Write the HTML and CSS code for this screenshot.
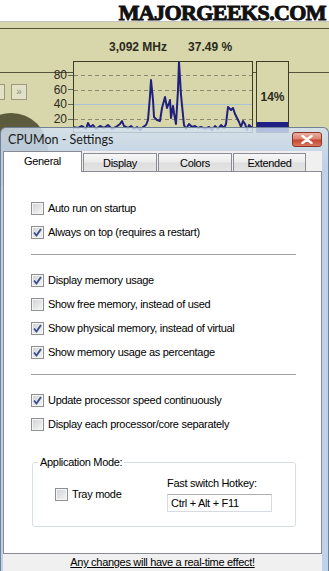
FILE: index.html
```html
<!DOCTYPE html>
<html lang="en">
<head>
    <meta charset="UTF-8">
    <title>CPUMon - Settings</title>
    <link rel="stylesheet" href="styles.css">
</head>
<body>
    <div class="brand"><span class="logo">MAJORGEEKS.COM</span></div>

    <div class="monitor">
        <div class="readout"><span>3,092 MHz</span><span>37.49 %</span></div>
        <div class="chart">
            <div class="side">
                <div class="nav"><span class="navbtn"></span><span class="navbtn">&raquo;</span></div>
                <div class="axis"><span>80</span><span>60</span><span>40</span><span>20</span></div>
            </div>
            <div class="graph">
                <svg width="178" height="70" viewBox="74 62 178 70">
                    <g stroke="#8a8970" stroke-width="1" stroke-dasharray="4 3">
                        <line x1="74" y1="75.5" x2="252" y2="75.5"/>
                        <line x1="74" y1="90.5" x2="252" y2="90.5"/>
                        <line x1="74" y1="119.5" x2="252" y2="119.5"/>
                    </g>
                    <line x1="74" y1="104.5" x2="252" y2="104.5" stroke="#a9c3d3" stroke-width="1"/>
                    <polyline fill="none" stroke="#1f1f7e" stroke-width="2" stroke-linejoin="round"
                        points="73,127 78,128 82,126 86,129 88,123 90,127 93,125 96,129 100,126 104,128 108,125 112,129 116,127 120,124 122,121 124,126 128,128 131,126 134,129 137,127 140,130 143,127 146,125 148,120 150,96 151,80 153,100 154,117 157,120 160,121 162,108 165,97 167,108 169,103 170,100 171,118 173,106 174,113 176,124 178,90 179,62 181,95 183,115 184,125 186,129 189,124 192,127 195,126 198,128 201,127 205,129 209,127 212,130 215,126 218,129 221,125 224,128 226,124 228,107 231,110 233,108 235,114 237,118 239,122 241,127 243,121 245,124 247,130 249,125 252,128"/>
                </svg>
            </div>
            <div class="meter"><span>14%</span><div class="meter-fill"></div></div>
        </div>
    </div>

    <div class="dialog">
        <div class="titlebar">
            <span class="title">CPUMon - Settings</span>
            <span class="close">
                <svg width="12" height="9" viewBox="0 0 12 9"><path d="M1.5 1 L10.5 8 M10.5 1 L1.5 8" stroke="#fff" stroke-width="2.4" stroke-linecap="round"/></svg>
            </span>
        </div>
        <div class="client">
            <div class="tabs">
                <span class="tab active">General</span>
                <span class="tab tab-display">Display</span>
                <span class="tab tab-colors">Colors</span>
                <span class="tab tab-extended">Extended</span>
            </div>
            <div class="panel">
                <label class="check"><span class="box"></span>Auto run on startup</label>
                <label class="check"><span class="box checked"><svg width="11" height="11" viewBox="0 0 11 11"><path d="M2 5.5 L4.5 8.5 L9 2" fill="none" stroke="#3c4f92" stroke-width="1.9"/></svg></span>Always on top (requires a restart)</label>
                <hr class="sep">
                <label class="check"><span class="box checked"><svg width="11" height="11" viewBox="0 0 11 11"><path d="M2 5.5 L4.5 8.5 L9 2" fill="none" stroke="#3c4f92" stroke-width="1.9"/></svg></span>Display memory usage</label>
                <label class="check"><span class="box"></span>Show free memory, instead of used</label>
                <label class="check"><span class="box checked"><svg width="11" height="11" viewBox="0 0 11 11"><path d="M2 5.5 L4.5 8.5 L9 2" fill="none" stroke="#3c4f92" stroke-width="1.9"/></svg></span>Show physical memory, instead of virtual</label>
                <label class="check"><span class="box checked"><svg width="11" height="11" viewBox="0 0 11 11"><path d="M2 5.5 L4.5 8.5 L9 2" fill="none" stroke="#3c4f92" stroke-width="1.9"/></svg></span>Show memory usage as percentage</label>
                <hr class="sep">
                <label class="check"><span class="box checked"><svg width="11" height="11" viewBox="0 0 11 11"><path d="M2 5.5 L4.5 8.5 L9 2" fill="none" stroke="#3c4f92" stroke-width="1.9"/></svg></span>Update processor speed continuously</label>
                <label class="check"><span class="box"></span>Display each processor/core separately</label>

                <fieldset class="mode">
                    <legend>Application Mode:</legend>
                    <div class="mode-row">
                        <label class="check"><span class="box"></span>Tray mode</label>
                        <div class="hotkey-col">
                            <div class="hotkey-label">Fast switch Hotkey:</div>
                            <div class="hotkey">Ctrl + Alt + F11</div>
                        </div>
                    </div>
                </fieldset>
            </div>
            <div class="footer"><span class="note">Any changes will have a real-time effect!</span></div>
        </div>
    </div>
</body>
</html>
```

FILE: styles.css
```css
body, html {
    margin: 0;
    padding: 0;
}
body {
    width: 329px;
    height: 571px;
    overflow: hidden;
    font-family: 'Liberation Sans', Arial, sans-serif;
    background: #d8d6ab;
}
.brand {
    height: 21px;
    background: #fff;
    border-bottom: 1px solid #c4c4c4;
    display: flex;
    justify-content: flex-end;
    align-items: flex-end;
    padding-right: 3px;
}
.logo {
    font-family: 'Liberation Serif', serif;
    font-weight: bold;
    font-size: 22px;
    line-height: 17px;
    letter-spacing: -0.6px;
    color: #111;
    -webkit-text-stroke: 1px #111;
}
.monitor {
    height: 111px;
    box-sizing: border-box;
    padding-top: 18px;
    color: #2b2b1c;
    background:
        linear-gradient(#55533a, #55533a) 0 6px / 100% 1px no-repeat,
        linear-gradient(#55533a, #55533a) 0 50px / 100% 1px no-repeat,
        #d8d6ab;
}
.readout {
    display: flex;
    gap: 21px;
    padding-left: 109px;
    height: 14px;
    line-height: 14px;
    font-size: 12px;
    font-weight: bold;
}
.chart {
    display: flex;
    height: 72px;
    margin-top: 7px;
}
.side {
    width: 73px;
    position: relative;
    display: flex;
    justify-content: space-between;
}
.side::before {
    content: "";
    position: absolute;
    left: -26px;
    top: 52px;
    width: 74px;
    height: 74px;
    border-radius: 50%;
    background: #5d5b3d;
}
.nav {
    display: flex;
    gap: 6px;
    margin-left: -11px;
    padding-top: 23px;
    align-items: flex-start;
}
.navbtn {
    width: 16px;
    height: 16px;
    box-sizing: border-box;
    border: 1px solid #9a9a80;
    background: #e2e1c6;
    font-size: 10px;
    line-height: 14px;
    text-align: center;
    color: #8c8c78;
}
.axis {
    display: flex;
    flex-direction: column;
    padding-top: 7px;
}
.axis span {
    display: flex;
    align-items: center;
    justify-content: flex-end;
    gap: 1px;
    height: 14.6px;
    font-size: 12px;
}
.axis span::after {
    content: "";
    width: 5px;
    border-top: 1px solid #6b6a50;
}
.graph {
    width: 180px;
    box-sizing: border-box;
    border: 1px solid #3d3c25;
    background: #d8d6ab;
}
.graph svg {
    display: block;
}
.meter {
    width: 33px;
    margin-left: 3px;
    box-sizing: border-box;
    border: 1px solid #3d3c25;
    background: #d8d6ab;
    display: flex;
    flex-direction: column;
    align-items: center;
    padding-top: 28px;
}
.meter span {
    font-size: 12px;
    font-weight: bold;
    line-height: 14px;
}
.meter-fill {
    margin-top: auto;
    align-self: stretch;
    height: 10px;
    background: #1e1e86;
}
.dialog {
    position: relative;
    margin-top: -6px;
    border: 1px solid #6f8296;
    border-bottom: none;
    border-radius: 6px 6px 0 0;
    padding: 0 6px 0 2px;
    background: linear-gradient(rgba(212, 226, 243, 0.82), rgba(190, 209, 233, 0.95) 40px, #bfd2e9);
}
.titlebar {
    height: 23px;
    display: flex;
    justify-content: space-between;
    align-items: flex-start;
}
.title {
    font-family: Lato, 'Noto Sans', sans-serif;
    font-size: 12.5px;
    line-height: 23px;
    padding-left: 5px;
    color: #1a1a1a;
}
.close {
    width: 30px;
    height: 15px;
    margin-top: 4px;
    box-sizing: border-box;
    border: 1px solid #8d3426;
    border-radius: 3px;
    background: linear-gradient(#eab0a2, #d9806c 48%, #c4452f 52%, #d8775f);
    display: flex;
    align-items: center;
    justify-content: center;
}
.close svg {
    display: block;
}
.client {
    background: #f0f0f0;
    font-size: 11px;
    letter-spacing: -0.3px;
    color: #000;
}
.tabs {
    display: flex;
    align-items: flex-end;
    height: 20px;
}
.tab {
    height: 18px;
    box-sizing: border-box;
    border: 1px solid #898c95;
    border-bottom: none;
    background: linear-gradient(#f7f7f7, #ececec 45%, #dedede 55%, #e4e4e4);
    text-align: center;
    line-height: 18px;
    margin-right: 1px;
}
.tab.active {
    width: 79px;
    height: 21px;
    margin-bottom: -1px;
    position: relative;
    background: #fff;
    line-height: 18px;
}
.tab-display { width: 74px; }
.tab-colors { width: 74px; }
.tab-extended { width: 73px; }
.panel {
    height: 383px;
    box-sizing: border-box;
    border: 1px solid #898c95;
    background: #fff;
    padding: 24px 25px 0 27px;
}
.check {
    display: flex;
    align-items: center;
    gap: 4px;
    height: 24px;
}
.box {
    flex: none;
    width: 13px;
    height: 13px;
    box-sizing: border-box;
    border: 1px solid #8f8f8f;
    background: linear-gradient(135deg, #cfd2d6, #f6f6f6);
    box-shadow: inset 0 0 0 1px #f5f5f5;
}
.box svg {
    display: block;
}
.sep {
    margin: 10px 0 13px;
    height: 0;
    border: 0;
    border-top: 1px solid #a0a0a0;
}
.mode {
    margin: 20px 0 0 1px;
    padding: 7px 0 14px 0;
    border: 1px solid #d5dfe5;
    border-radius: 3px;
}
.mode legend {
    margin-left: 5px;
    padding: 0 2px;
    line-height: 13px;
}
.mode-row {
    display: grid;
    grid-template-columns: 112px 1fr;
    align-items: center;
    padding-left: 22px;
}
.hotkey-label {
    line-height: 14px;
}
.hotkey {
    width: 105px;
    height: 18px;
    margin-top: 4px;
    box-sizing: border-box;
    border: 1px solid #d6dbe2;
    border-top-color: #abadb3;
    padding-left: 3px;
    line-height: 16px;
}
.footer {
    height: 17px;
    line-height: 17px;
    text-align: center;
}
.note {
    text-decoration: underline;
}
```
